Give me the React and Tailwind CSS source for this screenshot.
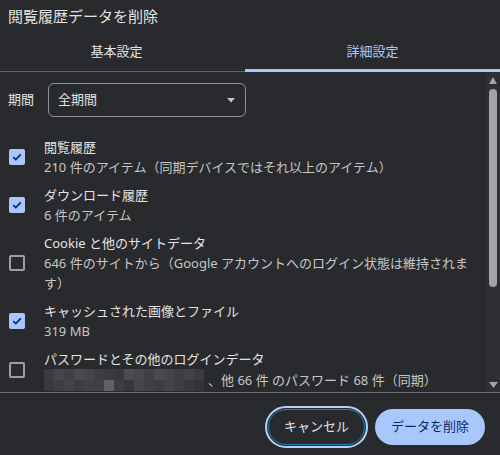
import React from "react";

const CheckBox = ({ checked }) =>
  checked ? (
    <div className="w-4 h-4 rounded-[2px] bg-[#a8c7fa] flex items-center justify-center shrink-0">
      <svg width="12" height="12" viewBox="0 0 12 12">
        <path d="M2.3 6.2 L4.8 8.6 L9.8 3.4" fill="none" stroke="#062e6f" strokeWidth="1.8" />
      </svg>
    </div>
  ) : (
    <div className="w-4 h-4 rounded-[2px] border-2 border-[#9e9e9e] shrink-0" />
  );

// redacted part of the password line
const mosaic = [
  ["#3b3c3f", "#45464a", "#3f4043", "#4a4b4f", "#45464a", "#3d3e41", "#3a3b3e", "#37383b", "#4b4c50", "#47484c", "#404144", "#4a4b4f", "#45464a", "#3e3f42", "#434448", "#3a3b3e"],
  ["#38393c", "#3e3f42", "#434447", "#3c3d40", "#414245", "#3f4043", "#5f6064", "#3d3e41", "#36373a", "#45464a", "#3f4043", "#3c3d40", "#434447", "#3d3e41", "#38393c", "#333437"],
];

function Item({ checked, title, children }) {
  return (
    <div className="flex items-center">
      <div className="ml-[1px] mr-[19px]">
        <CheckBox checked={checked} />
      </div>
      <div className="leading-[20px] text-[13px]">
        <div className="text-[#e3e3e3] whitespace-nowrap">{title}</div>
        <div className="text-[#c4c7c5] whitespace-nowrap">{children}</div>
      </div>
    </div>
  );
}

export default function App() {
  return (
    <div className="w-[500px] h-[455px] overflow-hidden bg-[#292a2d] font-['Noto_Sans','Noto_Sans_CJK_JP',sans-serif] flex flex-col">
      {/* Title */}
      <div className="h-[32px] pt-[6px] pl-2 text-[15px] leading-[20px] text-[#e3e3e3]">
        閲覧履歴データを削除
      </div>

      {/* Tabs */}
      <div className="flex h-[40px] text-[13px]">
        <div className="w-[245px] shrink-0 flex items-center justify-center pr-3 text-[#e3e3e3] shadow-[inset_0_-1px_0_#5f6368]">
          基本設定
        </div>
        <div className="flex-1 flex items-center justify-center text-[#a8c7fa] shadow-[inset_0_-3px_0_#a8c7fa]">
          詳細設定
        </div>
      </div>

      {/* Scroll area */}
      <div className="flex h-[321px] border-b border-[#6b6e72]">
        <div className="flex-1 overflow-hidden pl-2 pt-[11px]">
          <div className="flex items-center text-[13px]">
            <span className="w-[40px] text-[#e3e3e3]">期間</span>
            <div className="w-[198px] h-[34px] rounded-[6px] border border-[#8e9195] flex items-center justify-between pl-[9px] pr-[10px] text-[#e3e3e3]">
              <span>全期間</span>
              <svg width="8" height="5" viewBox="0 0 8 5">
                <path d="M0 0 H8 L4 4.5 Z" fill="#c4c7c5" />
              </svg>
            </div>
          </div>

          <div className="mt-[20px] flex flex-col gap-2">
            <Item checked title="閲覧履歴">
              210 件のアイテム（同期デバイスではそれ以上のアイテム）
            </Item>
            <Item checked title="ダウンロード履歴">
              6 件のアイテム
            </Item>
            <Item title="Cookie と他のサイトデータ">
              646 件のサイトから（Google アカウントへのログイン状態は維持されま
              <br />
              す）
            </Item>
            <Item checked title="キャッシュされた画像とファイル">
              319 MB
            </Item>
            <Item title="パスワードとその他のログインデータ">
              <span className="flex items-center">
                <span className="flex flex-col w-[160px] mr-[4px]">
                  {mosaic.map((row, i) => (
                    <span key={i} className="flex h-[11px]">
                      {row.map((c, j) => (
                        <span key={j} className="w-[10px] h-[11px]" style={{ backgroundColor: c }} />
                      ))}
                    </span>
                  ))}
                </span>
                、他 66 件 のパスワード 68 件（同期）
              </span>
            </Item>
          </div>
        </div>

        {/* Scrollbar */}
        <div className="w-[14px] bg-[#2e2f32] flex flex-col items-center pt-[5px]">
          <svg width="8" height="7" viewBox="0 0 8 7">
            <path d="M4 0 L8 7 H0 Z" fill="#a3a3a3" />
          </svg>
          <div className="mt-[5px] w-[8px] h-[198px] rounded-t-[4px] rounded-b-[4px] bg-[#a3a3a3]" />
          <div className="flex-1" />
          <svg width="9" height="6" viewBox="0 0 9 6" className="mb-[4px]">
            <path d="M0 0 H9 L4.5 6 Z" fill="#a3a3a3" />
          </svg>
        </div>
      </div>

      {/* Footer */}
      <div className="flex justify-end pt-[16px] pr-[15px] text-[13px]">
        <button className="w-[97px] h-[36px] rounded-full border border-[#1b84b8] outline-2 outline-offset-1 outline-[#b6d0fa] text-[#e3e3e3] flex items-center justify-center">
          キャンセル
        </button>
        <button className="ml-[10px] w-[110px] h-[36px] rounded-full bg-[#a8c7fa] text-[#062e6f] flex items-center justify-center">
          データを削除
        </button>
      </div>
    </div>
  );
}
